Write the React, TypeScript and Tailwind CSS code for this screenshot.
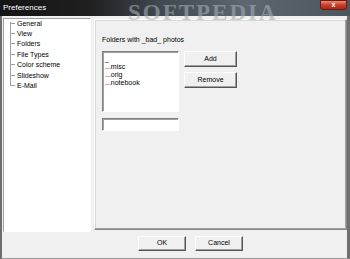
import React from "react";

const treeItems = ["General", "View", "Folders", "File Types", "Color scheme", "Slideshow", "E-Mail"];
const folders = ["_", "...misc", "...orig", "...notebook"];

function Button({ label, className = "" }: { label: string; className?: string }) {
  return (
    <div
      className={`flex items-center justify-center border border-t-[#fff] border-l-[#fff] border-r-[#555] border-b-[#555] bg-[#f0f0f0] shadow-[inset_-1px_-1px_0_#a0a0a0] text-[7px] text-black ${className}`}
    >
      {label}
    </div>
  );
}

export default function App() {
  return (
    <div
      className="flex h-[259px] w-[350px] flex-col overflow-hidden bg-[#f0f0f0] text-black"
      style={{ fontFamily: '"Liberation Sans", Arial, sans-serif' }}
    >
      {/* title bar */}
      <div className="relative flex h-[16px] items-center bg-[linear-gradient(90deg,#151515_0%,#1e1e1e_25%,#3f474f_45%,#5d676f_70%,#4c565e_100%)] pl-[3px]">
        <span className="text-[8px] text-white">Preferences</span>
        <span
          className="absolute left-[128px] top-[-4px] text-[23px] font-bold tracking-[2px] text-[#a4acb3] opacity-60"
          style={{ fontFamily: '"Liberation Serif", serif' }}
        >
          SOFTPEDIA
        </span>
        <div className="absolute right-[3px] top-0 flex h-[10px] w-[27px] items-center justify-center rounded-b-[3px] border border-[#6b1a10] bg-[linear-gradient(#e88a70,#c8402a_50%,#a82a18)] text-[7px] font-bold text-white">
          x
        </div>
      </div>

      <div className="flex flex-1 border-l-2 border-r-[3px] border-b border-l-[#6e6e6e] border-r-[#6e6e6e] border-b-[#9a9a9a]">
        <div className="flex flex-1 flex-col">
          <div className="flex gap-[3px] pl-px pt-[2px]">
            {/* tree */}
            <div className="relative h-[214px] w-[88px] border border-t-[#a0a0a0] border-l-[#a0a0a0] border-r-[#fff] border-b-[#fff] bg-white">
              <div className="absolute left-[6px] top-[3px] h-[63px] border-l border-[#a0a0a0]" />
              <div className="-mt-px flex flex-col">
                {treeItems.map((item) => (
                  <div key={item} className="flex h-[10.4px] items-center">
                    <div className="ml-[6px] w-[5px] border-t border-[#a0a0a0]" />
                    <span className="ml-[2px] text-[7px] leading-none">{item}</span>
                  </div>
                ))}
              </div>
            </div>

            {/* right panel */}
            <div className="mt-px flex h-[211px] flex-1 flex-col border border-t-[#fff] border-l-[#fff] border-r-[#888] border-b-[#888] shadow-[inset_-1px_-1px_0_#a0a0a0,inset_1px_1px_0_#d8d8d8] pl-[7px] pt-[16px]">
              <div className="text-[7px] leading-none">Folders with _bad_ photos</div>
              <div className="mt-[8px] flex gap-[5px]">
                <div className="flex flex-col gap-[6px]">
                  <div className="h-[61px] w-[77px] border border-t-[#808080] border-l-[#808080] border-r-[#fff] border-b-[#fff] bg-white pl-[2px] pt-[3px] shadow-[inset_1px_1px_0_#a0a0a0]">
                    {folders.map((f) => (
                      <div key={f} className="h-[8px] text-[7px] leading-[8px]">
                        {f}
                      </div>
                    ))}
                  </div>
                  <div className="h-[13px] w-[77px] border border-t-[#808080] border-l-[#808080] border-r-[#fff] border-b-[#fff] bg-white shadow-[inset_1px_1px_0_#a0a0a0]" />
                </div>
                <div className="flex flex-col gap-[5px]">
                  <Button label="Add" className="h-[16px] w-[53px]" />
                  <Button label="Remove" className="h-[16px] w-[53px]" />
                </div>
              </div>
            </div>
          </div>

          {/* bottom buttons */}
          <div className="flex gap-[9px] pl-[136px] pt-[4px]">
            <Button label="OK" className="h-[15px] w-[48px]" />
            <Button label="Cancel" className="h-[15px] w-[48px]" />
          </div>
        </div>
      </div>
    </div>
  );
}
